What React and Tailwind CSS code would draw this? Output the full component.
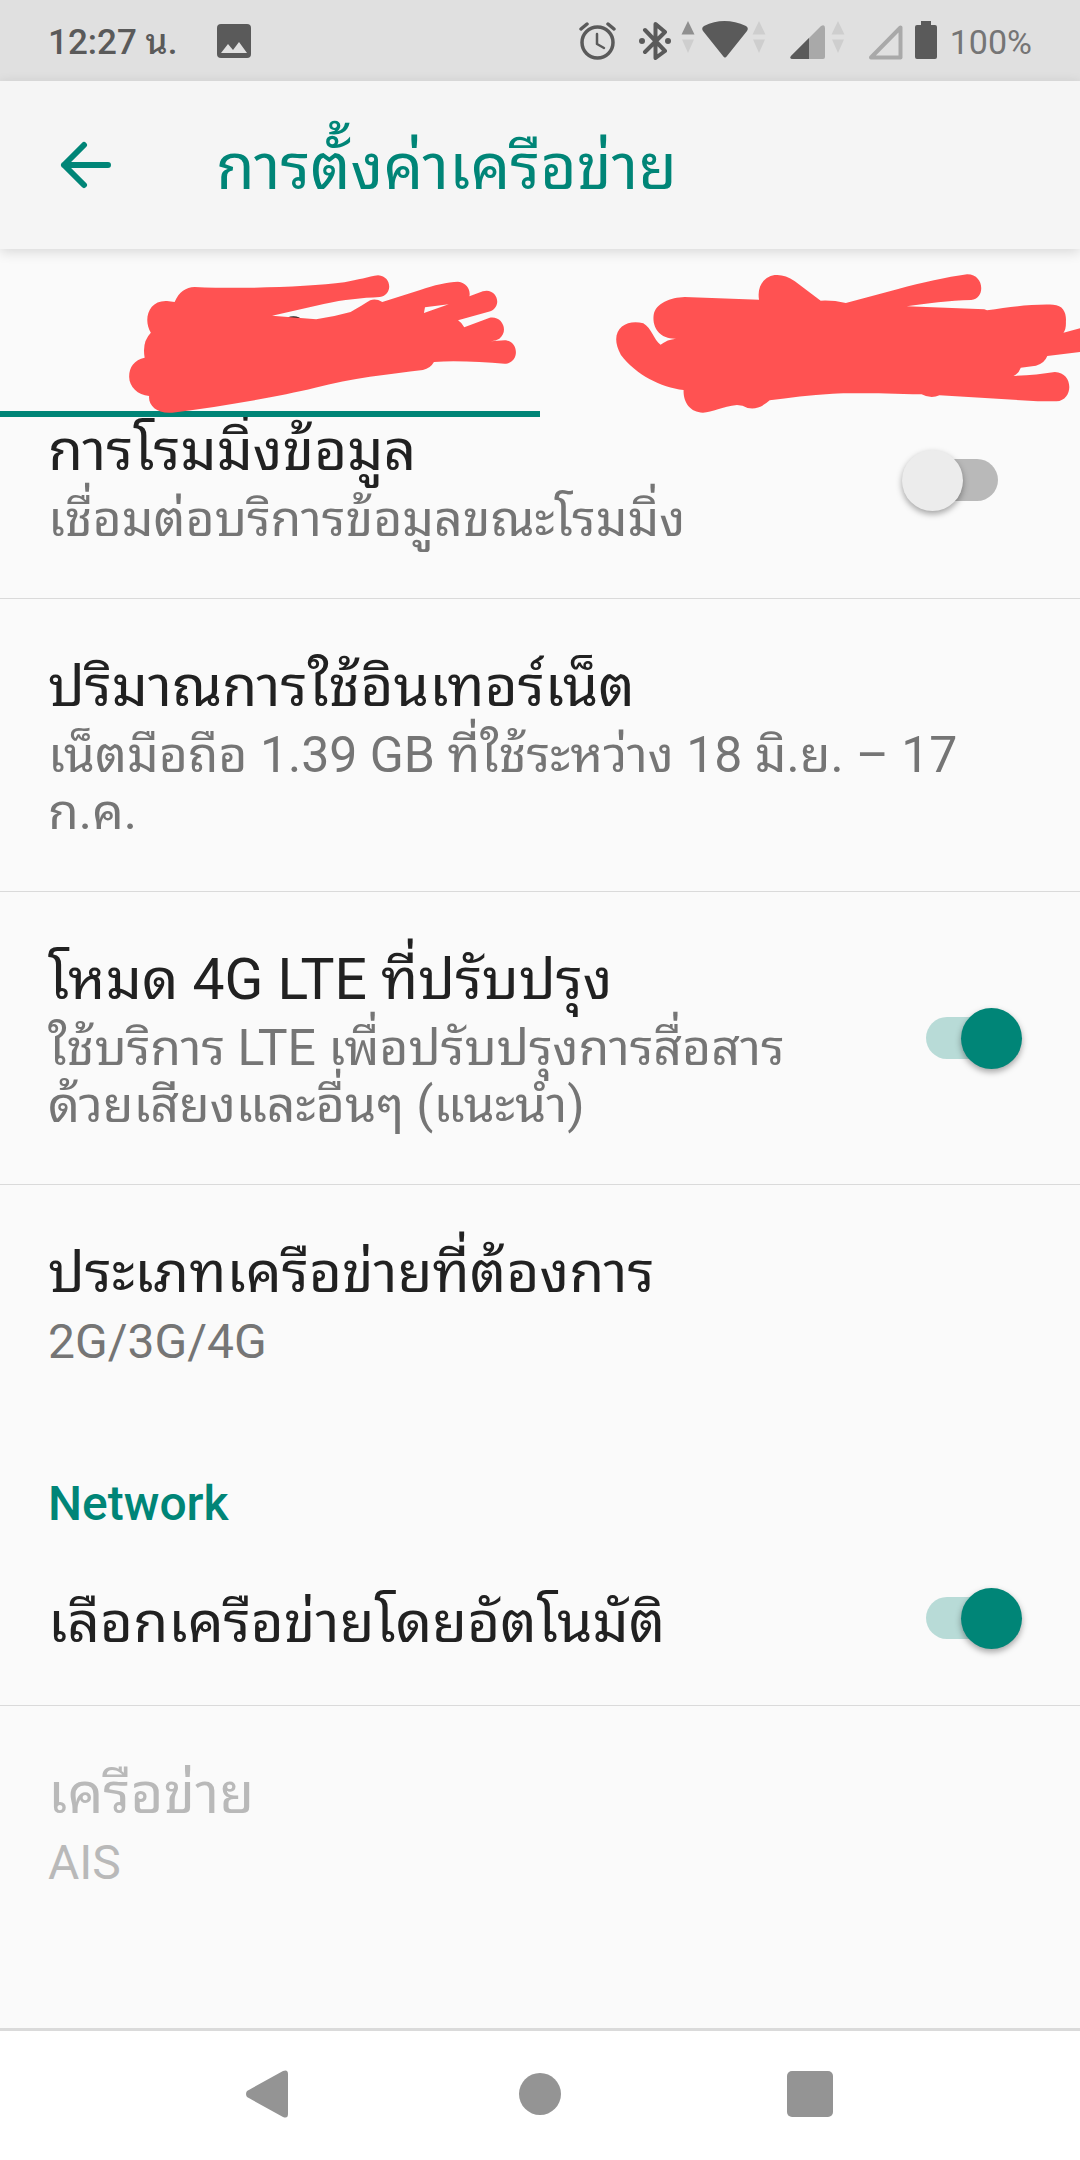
import { useState } from "react"

const DataArrows = ({ active }) => (
    <svg className="h-8 w-3.5 shrink-0" viewBox="0 0 14 32" aria-hidden="true">
        <path d="M7 0L13.5 13.5H0.5Z" fill={active ? "#8f8f8f" : "#cecece"} />
        <path d="M7 32L13 18.5H1Z" fill="#cecece" />
    </svg>
)

const StatusBar = () => (
    <div className="flex h-[81px] items-start justify-between bg-[#e0e0e0] px-12 pt-[21px] text-[#5a5a5a]">
        <div className="flex items-start">
            <span className="w-[168px] text-[35px] leading-[44px] font-medium">12:27 น.</span>
            <svg className="mt-0.5 h-9 w-9" viewBox="0 0 36 36" aria-hidden="true">
                <rect x="1" y="1" width="34" height="34" rx="4" fill="#5a5a5a" />
                <path d="M5 30L12 21L17 27L23 19L31 30Z" fill="#e0e0e0" />
            </svg>
        </div>
        <div className="flex items-start">
            <svg className="mr-[23px] h-[39px] w-[37px]" viewBox="0 0 37 39" fill="none" stroke="#5a5a5a" strokeLinecap="round" aria-hidden="true">
                <circle cx="18.500" cy="21.500" r="15.500" strokeWidth="3.500" />
                <path d="M2 8L8 3M29 3L35 8" strokeWidth="3.500" />
                <path d="M18 13V23L25 27" strokeWidth="2.500" strokeLinejoin="round" />
            </svg>
            <svg className="mr-2.5 h-[39px] w-8" viewBox="0 0 32 39" fill="none" stroke="#5a5a5a" strokeWidth="4" strokeLinecap="round" strokeLinejoin="round" aria-hidden="true">
                <path d="M6 9L26 30L16.500 37V3L26 11L6 31" />
                <circle cx="3" cy="20" r="3" fill="#5a5a5a" stroke="none" />
                <circle cx="29" cy="20" r="3" fill="#5a5a5a" stroke="none" />
            </svg>
            <DataArrows active />
            <svg className="ml-[7px] mr-1 h-[39px] w-[46px]" viewBox="0 0 46 39" aria-hidden="true">
                <path d="M1 10Q-1 7 2 5Q22 -5 44 5Q47 7 45 10L25 35Q23 38 21 35Z" fill="#5a5a5a" />
            </svg>
            <DataArrows />
            <svg className="ml-6 mr-1.5 h-[39px] w-[35px]" viewBox="0 0 35 39" aria-hidden="true">
                <path d="M1 35L31 5Q35 3 35 7V36Q35 38 33 38H3Q-1 38 1 35Z" fill="#a9a9a9" />
                <path d="M1 35L19 17V38H3Q-1 38 1 35Z" fill="#5a5a5a" />
            </svg>
            <DataArrows />
            <svg className="ml-[23px] mr-3 h-[39px] w-[35px]" viewBox="0 0 35 39" aria-hidden="true">
                <path d="M3 36.500L32.500 6.500V36.500Z" fill="none" stroke="#a9a9a9" strokeWidth="4" strokeLinejoin="round" />
            </svg>
            <svg className="mr-[13px] h-[39px] w-[22px]" viewBox="0 0 22 39" aria-hidden="true">
                <path d="M6 0H16V4H20Q22 4 22 6V36Q22 38 20 38H2Q0 38 0 36V6Q0 4 2 4H6Z" fill="#5a5a5a" />
            </svg>
            <span className="text-[34px] leading-[42px] text-[#757575]">100%</span>
        </div>
    </div>
)

const AppBar = () => (
    <header className="relative z-10 flex h-[168px] items-center bg-[#f5f5f5] pl-[60px] text-[#008577] shadow-[0_3px_12px_rgba(0,0,0,0.14)]">
        <button type="button" aria-label="กลับ" className="mr-[104px]">
            <svg className="h-12 w-[52px]" viewBox="0 0 52 48" fill="none" stroke="currentColor" strokeWidth="6" strokeLinecap="round" strokeLinejoin="round">
                <path d="M48 24H4M24 4L4 24L24 44" />
            </svg>
        </button>
        <h1 className="pt-1.5 text-[63px] leading-[76px]">การตั้งค่าเครือข่าย</h1>
    </header>
)

// each SIM name is covered by a hand-drawn red scribble
const tabs = [
    {
        label: 'SIM 1',
        ink: true,
        d: "M507 156C520 125 540 112 565 111C720 118 900 110 1000 97C1040 90 1070 80 1098 76C1140 80 1140 135 1103 141C1050 144 1000 148 940 162L790 197L918 208Q970 200 1018 186C1040 174 1060 160 1075 151Q1092 145 1110 156L1220 120C1260 105 1300 96 1330 95C1355 98 1367 120 1363 139L1402 124C1440 112 1462 165 1424 184L1330 211Q1342 219 1348 232L1420 204C1455 195 1480 240 1450 266Q1440 273 1425 274L1465 271C1508 272 1510 340 1465 341C1400 337 1330 331 1260 336Q1250 355 1228 360C1130 372 1020 385 915 413C800 442 640 470 500 488C455 492 430 465 433 438C400 435 375 410 375 380C375 350 390 330 420 323Q412 275 438 248C415 210 430 150 485 153ZM1234 172L1303 163L1231 189Z",
    },
    {
        label: 'SIM 2',
        d: "M636 149C628 100 660 75 687 75Q712 74 740 94L815 152Q850 150 888 159L1040 117C1110 97 1180 82 1240 73C1290 72 1295 145 1252 150C1190 152 1120 160 1065 169L1290 178L1298 181C1370 170 1430 162 1490 164C1520 165 1529 190 1527 215Q1528 238 1520 248L1568 235V306L1473 318Q1465 340 1440 347L1396 353Q1390 370 1375 378Q1440 375 1495 366C1550 368 1550 450 1500 454H1445L1160 436Q1135 448 1108 433C1000 430 900 428 850 431Q750 438 667 451Q625 490 588 467L572 465C530 470 500 487 473 488C435 488 415 455 417 420C350 412 280 375 235 315C195 240 250 205 300 220C325 235 330 270 350 284Q370 268 395 266C350 268 325 235 330 195C335 160 380 142 420 141Z",
    },
]

const SimTabs = () => {
    const [active, setActive] = useState(0)

    return (
        <div role="tablist" className="grid h-[168px] grid-cols-2">
            {tabs.map((tab, index) => (
                <button key={index} type="button" role="tab" aria-label={tab.label} aria-selected={active === index} onClick={() => setActive(index)} className={`relative border-b-[6px] ${active === index ? 'border-[#008577]' : 'border-transparent'}`}>
                    <svg className="absolute top-0 left-0 h-[168px] w-full" viewBox="0 0 540 168" preserveAspectRatio="none" aria-hidden="true">
                        <g transform="translate(0 1) scale(0.3444 0.3333)">
                            {tab.ink && <ellipse cx="852" cy="208" rx="22" ry="9" fill="#212121" />}
                            <path d={tab.d} fill="#ff5252" fillRule="evenodd" />
                        </g>
                    </svg>
                </button>
            ))}
        </div>
    )
}

const Switch = ({ id, defaultChecked }) => (
    <input
        id={id}
        type="checkbox"
        role="switch"
        defaultChecked={defaultChecked}
        className="relative h-[61px] w-[120px] shrink-0 appearance-none before:absolute before:top-[9px] before:left-6 before:h-[42px] before:w-[72px] before:rounded-full before:bg-[#b9b9b9] after:absolute after:top-0 after:left-0 after:size-[61px] after:rounded-full after:bg-[#ececec] after:shadow-[0_3px_6px_rgba(0,0,0,0.35)] checked:before:bg-[#b8dbd7] checked:after:left-[59px] checked:after:bg-[#008577]"
    />
)

const RowText = ({ title, summary, latin, disabled }) => (
    <span className={`block ${disabled ? 'text-[#b9b9b9]' : 'text-[#212121]'} ${summary ? '' : 'pt-2'}`}>
        <span className="block text-[57px] leading-[76px]">{title}</span>
        {summary && (
            <span className={`mt-0.5 block leading-[57px] ${latin ? 'text-[48px]' : 'text-[50px]'} ${disabled ? '' : 'text-[#757575]'}`}>
                {summary.map((line) => <span key={line} className="block">{line}</span>)}
            </span>
        )}
    </span>
)

const SwitchRow = ({ id, title, summary, checked }) => (
    <label htmlFor={id} className={`flex items-center justify-between border-b border-[#dadada] pr-[58px] pl-12 ${summary ? 'py-[50px]' : 'h-[174px]'}`}>
        <RowText title={title} summary={summary} />
        <Switch id={id} defaultChecked={checked} />
    </label>
)

const LinkRow = ({ title, summary, latin, divider, disabled }) => (
    <button type="button" disabled={disabled} className={`block w-full px-12 py-[50px] text-left ${divider ? 'border-b border-[#dadada]' : ''}`}>
        <RowText title={title} summary={summary} latin={latin} disabled={disabled} />
    </button>
)

const NavBar = () => (
    <nav className="grid h-[132px] grid-cols-3 border-t-[3px] border-[#dadada] bg-white px-[12.5%] pb-[3px]">
        <button type="button" aria-label="ย้อนกลับ" className="flex items-center justify-center pr-1.5">
            <svg className="h-12 w-[42px]" viewBox="0 0 42 48" fill="#949494">
                <path d="M1 21L37 1Q42 -1 42 4V44Q42 49 37 47L1 27Q-1 24 1 21Z" />
            </svg>
        </button>
        <button type="button" aria-label="หน้าแรก" className="flex items-center justify-center">
            <span className="size-[42px] rounded-full bg-[#949494]"></span>
        </button>
        <button type="button" aria-label="แอปล่าสุด" className="flex items-center justify-center">
            <span className="size-[46px] rounded-[5px] bg-[#949494]"></span>
        </button>
    </nav>
)

const App = () => {
    return (
        <div lang="th" className="flex min-h-screen flex-col bg-[#fafafa] font-['Roboto','Noto_Sans_Thai_Looped','Noto_Sans_Thai_UI','Noto_Sans',sans-serif]">
            <StatusBar />
            <AppBar />
            <SimTabs />
            <main className="flex-1 overflow-hidden">
                {/* list is scrolled a little under the tabs */}
                <div className="-mt-[54px]">
                    <SwitchRow id="roaming" title="การโรมมิ่งข้อมูล" summary={['เชื่อมต่อบริการข้อมูลขณะโรมมิ่ง']} />
                    <LinkRow title="ปริมาณการใช้อินเทอร์เน็ต" summary={['เน็ตมือถือ 1.39 GB ที่ใช้ระหว่าง 18 มิ.ย. – 17', 'ก.ค.']} divider />
                    <SwitchRow id="lte" title="โหมด 4G LTE ที่ปรับปรุง" summary={['ใช้บริการ LTE เพื่อปรับปรุงการสื่อสาร', 'ด้วยเสียงและอื่นๆ (แนะนำ)']} checked />
                    <LinkRow title="ประเภทเครือข่ายที่ต้องการ" summary={['2G/3G/4G']} latin />
                    <h2 className="px-12 pt-[55px] text-[48px] leading-[57px] font-medium text-[#008577]">Network</h2>
                    <SwitchRow id="auto" title="เลือกเครือข่ายโดยอัตโนมัติ" checked />
                    <LinkRow title="เครือข่าย" summary={['AIS']} latin disabled />
                </div>
            </main>
            <NavBar />
        </div>
    )
}

export default App
